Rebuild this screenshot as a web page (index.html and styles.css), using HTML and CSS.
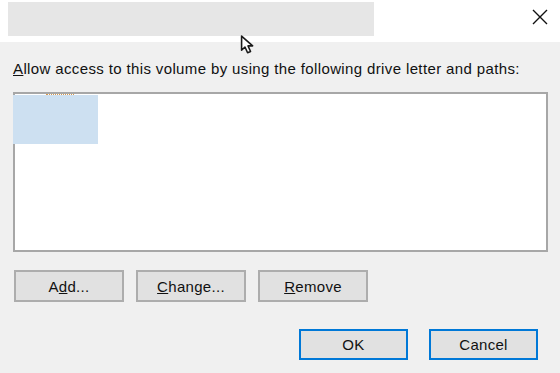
FILE: index.html
```html
<!DOCTYPE html>
<html lang="en">
<head>
    <meta charset="UTF-8">
    <title>Change Drive Letter and Paths</title>
    <link rel="stylesheet" href="styles.css">
</head>
<body>
    <!-- Title bar (caption is blurred out) -->
    <div class="titlebar">
        <div class="caption"></div>
        <svg class="close" width="16" height="16" viewBox="0 0 16 16">
            <path d="M1 1 L15 15 M15 1 L1 15" stroke="#111" stroke-width="1.4" fill="none"/>
        </svg>
    </div>

    <div class="dialog">
        <div class="label"><u>A</u>llow access to this volume by using the following drive letter and paths:</div>

        <div class="listbox">
            <div class="item"><span class="focus"></span></div>
        </div>

        <div class="button-group">
            <button type="button">A<u>d</u>d...</button>
            <button type="button"><u>C</u>hange...</button>
            <button type="button"><u>R</u>emove</button>
        </div>

        <div class="button-group right">
            <button type="button" class="default">OK</button>
            <button type="button" class="default">Cancel</button>
        </div>
    </div>

    <!-- Mouse pointer over the dialog -->
    <svg class="pointer" width="19" height="19" viewBox="0 0 18 18">
        <path d="M1.5 1 L1.5 14.5 L4.7 11.4 L7.2 16.8 L10 15.6 L7.6 10.3 L12 10.3 Z" fill="#fff" stroke="#1a1a1a" stroke-width="1.5" stroke-linejoin="round"/>
    </svg>
</body>
</html>
```

FILE: styles.css
```css
body {
    font-family: "Liberation Sans", Arial, sans-serif;
    font-size: 15px;
    margin: 0;
    padding: 0;
    width: 560px;
    height: 373px;
    background-color: #f0f0f0;
    color: #111;
    overflow: hidden;
}
.titlebar {
    height: 42px;
    background-color: #fff;
    display: flex;
    align-items: flex-start;
    justify-content: space-between;
}
.caption {
    width: 366px;
    height: 34px;
    margin: 2px 0 0 8px;
    background-color: #e6e6e6;
}
.close {
    margin: 9px 12px 0 0;
}
.dialog {
    padding: 18px 12px 0 13px;
    display: flex;
    flex-direction: column;
}
.label {
    height: 18px;
    line-height: 18px;
    white-space: nowrap;
    letter-spacing: 0.37px;
}
.listbox {
    margin-top: 14px;
    height: 156px;
    border: 2px solid #a7a7a7;
    background-color: #fff;
}
.item {
    width: 85px;
    height: 49px;
    margin: 1px 0 0 -2px;
    background-color: #cde0f1;
    position: relative;
}
.focus {
    position: absolute;
    left: 33px;
    top: -1px;
    width: 28px;
    border-top: 1px dotted #d89a50;
}
.button-group {
    display: flex;
    gap: 12px;
    margin-top: 18px;
    padding-left: 1px;
}
.button-group.right {
    justify-content: flex-end;
    gap: 21px;
    margin-top: 27px;
    padding-right: 10px;
}
button {
    font-family: "Liberation Sans", Arial, sans-serif;
    font-size: 15px;
    letter-spacing: 0.3px;
    color: #111;
    width: 110px;
    height: 32px;
    padding: 0;
    background-color: #e1e1e1;
    border: 2px solid #adadad;
}
button.default {
    width: 109px;
    height: 31px;
    border-color: #0078d7;
}
.pointer {
    position: absolute;
    left: 240px;
    top: 35px;
}
```
